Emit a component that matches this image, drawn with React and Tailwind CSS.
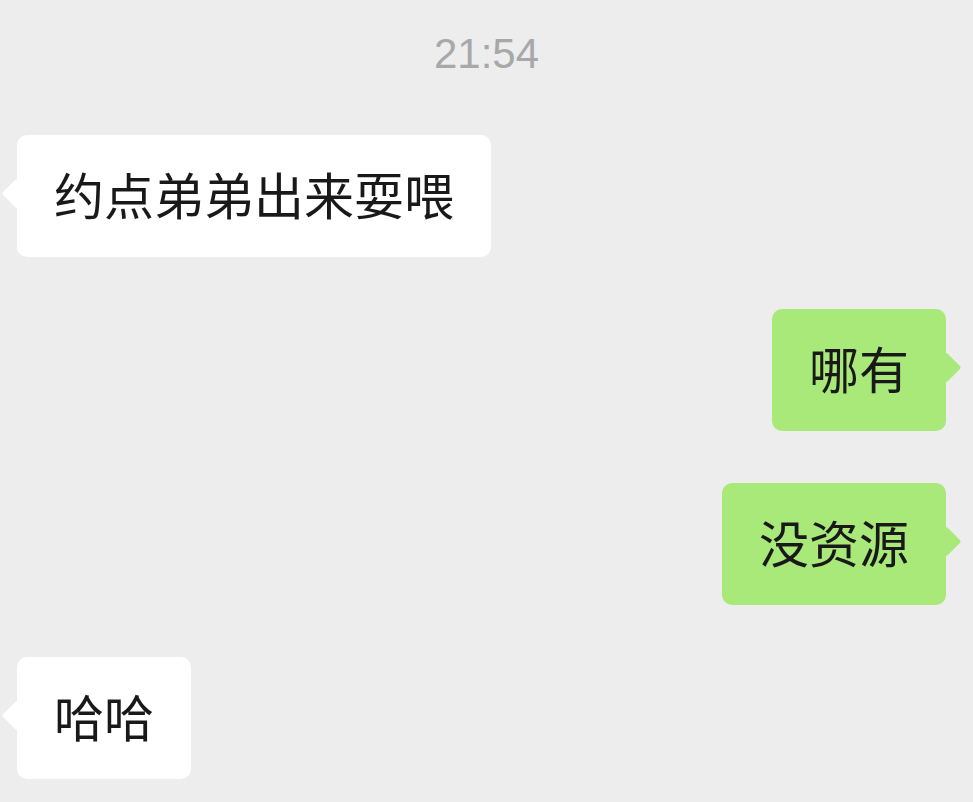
import React from "react";

const messages = [
  { id: 1, text: "约点弟弟出来耍喂", mine: false },
  { id: 2, text: "哪有", mine: true },
  { id: 3, text: "没资源", mine: true },
  { id: 4, text: "哈哈", mine: false },
];

const Bubble = ({ text, mine }) => {
  return (
    <div className={`flex ${mine ? "justify-end pr-[27px]" : "justify-start pl-[17px]"}`}>
      <div
        className={`relative rounded-[10px] px-[37px] pt-[23px] pb-[29px] text-[50px] leading-[70px] text-[#191919] ${
          mine ? "bg-[#a9e97a]" : "bg-white"
        }`}
      >
        <div
          className={`absolute top-[48px] w-[21px] h-[21px] rotate-45 rounded-[2px] ${
            mine ? "right-[-11px] bg-[#a9e97a]" : "left-[-11px] bg-white"
          }`}
        />
        <span className="relative">{text}</span>
      </div>
    </div>
  );
};

const App = () => {
  return (
    <div
      className="w-full min-h-screen bg-[#ededed] overflow-hidden"
      style={{ fontFamily: '"Noto Sans CJK SC", "Noto Sans", sans-serif' }}
    >
      <div
        className="pt-[30px] mb-[57px] text-center text-[42px] leading-[48px] text-[#a8a8a8]"
        style={{ fontFamily: '"Liberation Sans", Arial, sans-serif' }}
      >
        21:54
      </div>
      <div className="flex flex-col gap-[52px]">
        {messages.map((m) => (
          <Bubble key={m.id} text={m.text} mine={m.mine} />
        ))}
      </div>
    </div>
  );
};

export default App;
